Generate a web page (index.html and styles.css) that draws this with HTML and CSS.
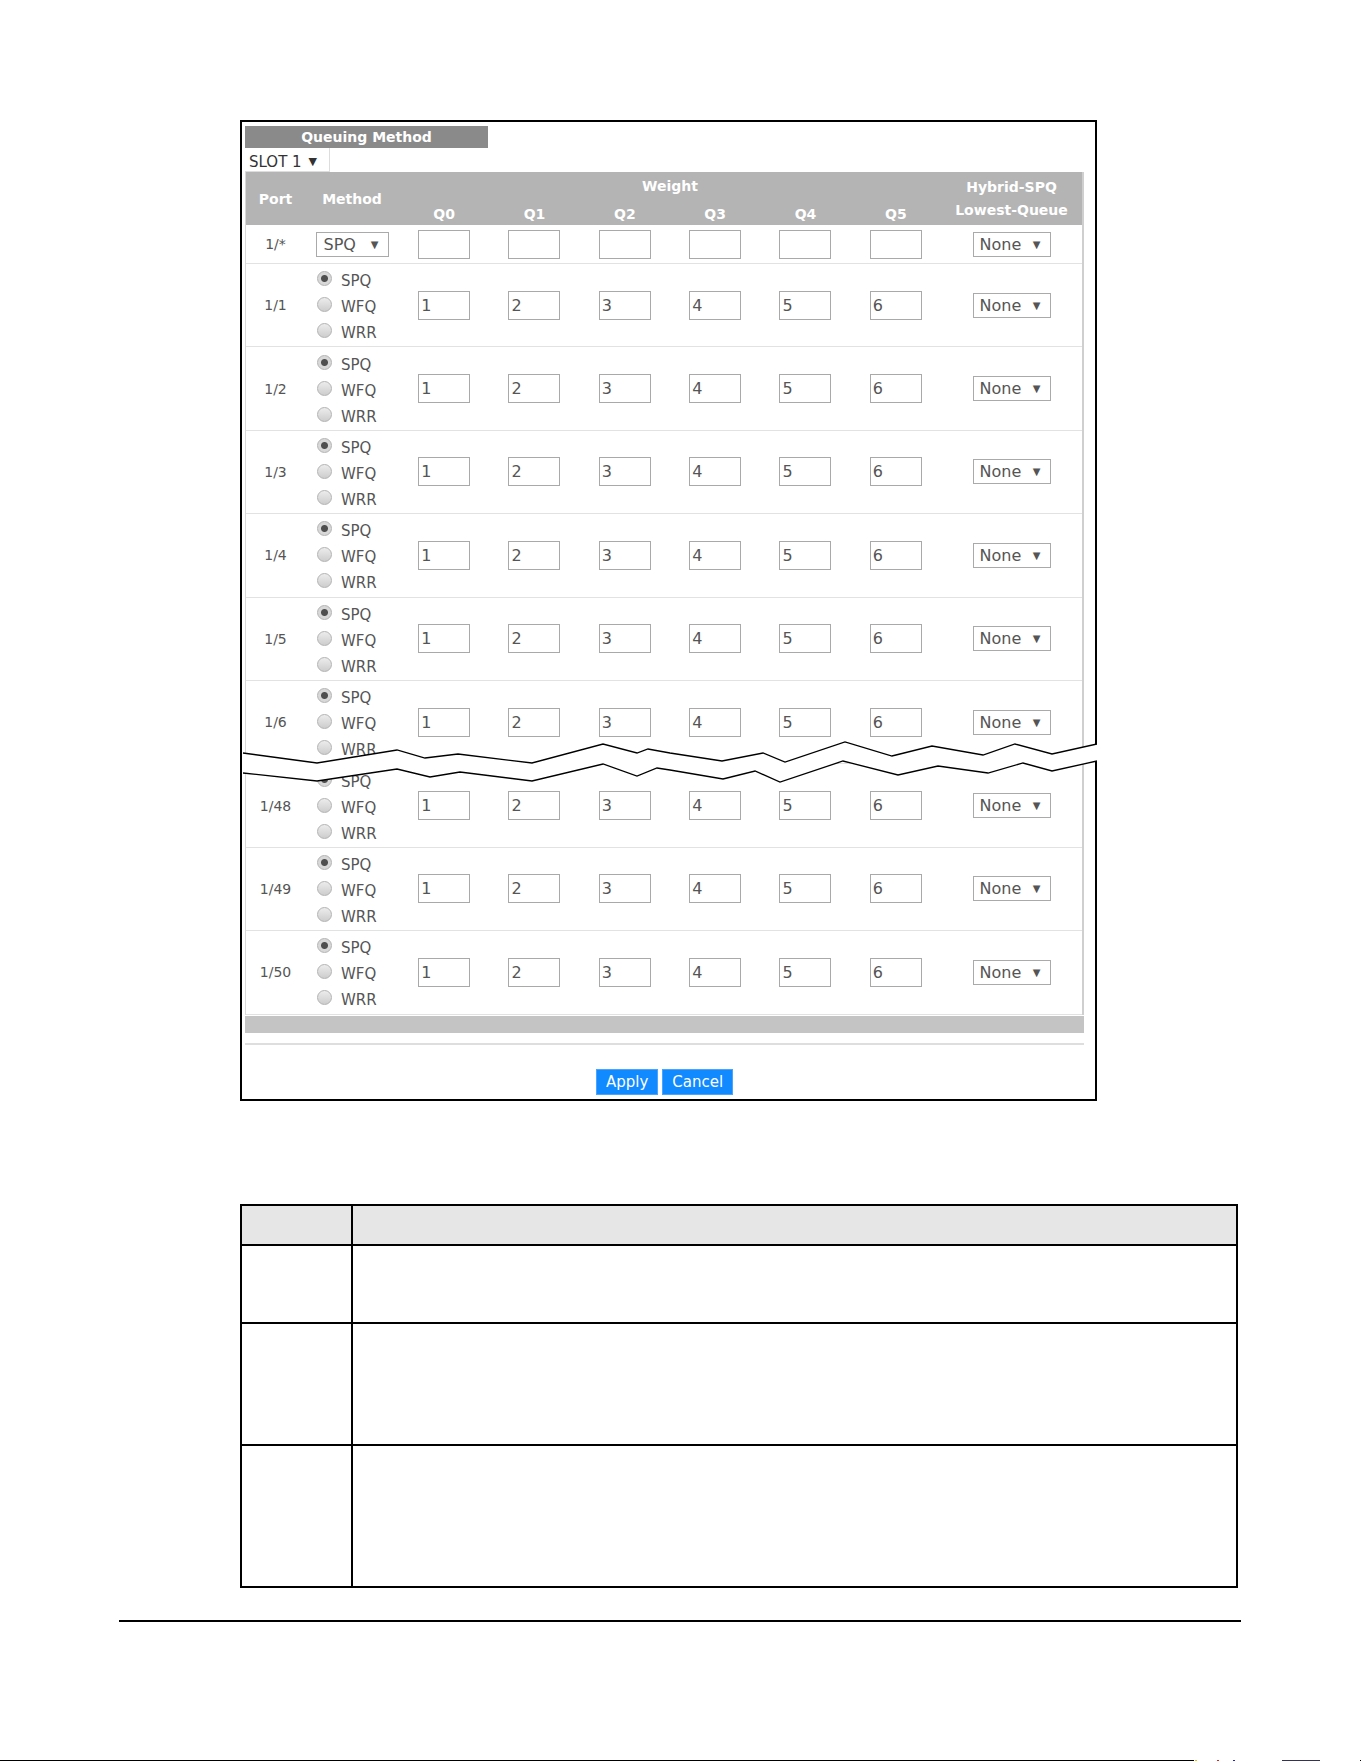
FILE: index.html
```html
<!DOCTYPE html>
<html lang="en">
<head>
    <meta charset="UTF-8">
    <title>Queuing Method</title>
    <link rel="stylesheet" href="styles.css">
</head>
<body>
<div class="screen">
    <div class="panel-title">Queuing Method</div>
    <div class="select slot">SLOT 1 <span class="caret">&#9660;</span></div>

    <table class="queue">
        <colgroup>
            <col class="c-port">
            <col class="c-method">
            <col class="c-q"><col class="c-q"><col class="c-q"><col class="c-q"><col class="c-q"><col class="c-q">
            <col class="c-hybrid">
        </colgroup>
        <thead>
        <tr class="head-top">
            <th rowspan="2">Port</th>
            <th rowspan="2">Method</th>
            <th colspan="6">Weight</th>
            <th rowspan="2" class="hybrid"><div><span>Hybrid-SPQ</span><span>Lowest-Queue</span></div></th>
        </tr>
        <tr class="head-sub">
            <th class="q">Q0</th><th class="q">Q1</th><th class="q">Q2</th>
            <th class="q">Q3</th><th class="q">Q4</th><th class="q">Q5</th>
        </tr>
        </thead>
        <tbody>
        <tr class="all-row">
            <td class="port">1/*</td>
            <td><span class="select method-sel">SPQ <span class="caret">&#9660;</span></span></td>
            <td><input type="text"></td><td><input type="text"></td><td><input type="text"></td>
            <td><input type="text"></td><td><input type="text"></td><td><input type="text"></td>
            <td><span class="select none">None <span class="caret">&#9660;</span></span></td>
        </tr>
        <tr class="port-row">
            <td class="port">1/1</td>
            <td class="method">
                <label><input type="radio" name="p1" checked>SPQ</label>
                <label><input type="radio" name="p1">WFQ</label>
                <label><input type="radio" name="p1">WRR</label>
            </td>
            <td><input type="text" value="1"></td><td><input type="text" value="2"></td><td><input type="text" value="3"></td>
            <td><input type="text" value="4"></td><td><input type="text" value="5"></td><td><input type="text" value="6"></td>
            <td><span class="select none">None <span class="caret">&#9660;</span></span></td>
        </tr>
        <tr class="port-row">
            <td class="port">1/2</td>
            <td class="method">
                <label><input type="radio" name="p2" checked>SPQ</label>
                <label><input type="radio" name="p2">WFQ</label>
                <label><input type="radio" name="p2">WRR</label>
            </td>
            <td><input type="text" value="1"></td><td><input type="text" value="2"></td><td><input type="text" value="3"></td>
            <td><input type="text" value="4"></td><td><input type="text" value="5"></td><td><input type="text" value="6"></td>
            <td><span class="select none">None <span class="caret">&#9660;</span></span></td>
        </tr>
        <tr class="port-row">
            <td class="port">1/3</td>
            <td class="method">
                <label><input type="radio" name="p3" checked>SPQ</label>
                <label><input type="radio" name="p3">WFQ</label>
                <label><input type="radio" name="p3">WRR</label>
            </td>
            <td><input type="text" value="1"></td><td><input type="text" value="2"></td><td><input type="text" value="3"></td>
            <td><input type="text" value="4"></td><td><input type="text" value="5"></td><td><input type="text" value="6"></td>
            <td><span class="select none">None <span class="caret">&#9660;</span></span></td>
        </tr>
        <tr class="port-row">
            <td class="port">1/4</td>
            <td class="method">
                <label><input type="radio" name="p4" checked>SPQ</label>
                <label><input type="radio" name="p4">WFQ</label>
                <label><input type="radio" name="p4">WRR</label>
            </td>
            <td><input type="text" value="1"></td><td><input type="text" value="2"></td><td><input type="text" value="3"></td>
            <td><input type="text" value="4"></td><td><input type="text" value="5"></td><td><input type="text" value="6"></td>
            <td><span class="select none">None <span class="caret">&#9660;</span></span></td>
        </tr>
        <tr class="port-row">
            <td class="port">1/5</td>
            <td class="method">
                <label><input type="radio" name="p5" checked>SPQ</label>
                <label><input type="radio" name="p5">WFQ</label>
                <label><input type="radio" name="p5">WRR</label>
            </td>
            <td><input type="text" value="1"></td><td><input type="text" value="2"></td><td><input type="text" value="3"></td>
            <td><input type="text" value="4"></td><td><input type="text" value="5"></td><td><input type="text" value="6"></td>
            <td><span class="select none">None <span class="caret">&#9660;</span></span></td>
        </tr>
        <tr class="port-row">
            <td class="port">1/6</td>
            <td class="method">
                <label><input type="radio" name="p6" checked>SPQ</label>
                <label><input type="radio" name="p6">WFQ</label>
                <label><input type="radio" name="p6">WRR</label>
            </td>
            <td><input type="text" value="1"></td><td><input type="text" value="2"></td><td><input type="text" value="3"></td>
            <td><input type="text" value="4"></td><td><input type="text" value="5"></td><td><input type="text" value="6"></td>
            <td><span class="select none">None <span class="caret">&#9660;</span></span></td>
        </tr>
        <tr class="port-row">
            <td class="port">1/48</td>
            <td class="method">
                <label><input type="radio" name="p48" checked>SPQ</label>
                <label><input type="radio" name="p48">WFQ</label>
                <label><input type="radio" name="p48">WRR</label>
            </td>
            <td><input type="text" value="1"></td><td><input type="text" value="2"></td><td><input type="text" value="3"></td>
            <td><input type="text" value="4"></td><td><input type="text" value="5"></td><td><input type="text" value="6"></td>
            <td><span class="select none">None <span class="caret">&#9660;</span></span></td>
        </tr>
        <tr class="port-row">
            <td class="port">1/49</td>
            <td class="method">
                <label><input type="radio" name="p49" checked>SPQ</label>
                <label><input type="radio" name="p49">WFQ</label>
                <label><input type="radio" name="p49">WRR</label>
            </td>
            <td><input type="text" value="1"></td><td><input type="text" value="2"></td><td><input type="text" value="3"></td>
            <td><input type="text" value="4"></td><td><input type="text" value="5"></td><td><input type="text" value="6"></td>
            <td><span class="select none">None <span class="caret">&#9660;</span></span></td>
        </tr>
        <tr class="port-row">
            <td class="port">1/50</td>
            <td class="method">
                <label><input type="radio" name="p50" checked>SPQ</label>
                <label><input type="radio" name="p50">WFQ</label>
                <label><input type="radio" name="p50">WRR</label>
            </td>
            <td><input type="text" value="1"></td><td><input type="text" value="2"></td><td><input type="text" value="3"></td>
            <td><input type="text" value="4"></td><td><input type="text" value="5"></td><td><input type="text" value="6"></td>
            <td><span class="select none">None <span class="caret">&#9660;</span></span></td>
        </tr>
        </tbody>
    </table>

    <!-- the "cut" between port 1/6 and 1/48 -->
    <svg class="break" width="855" height="46" viewBox="0 0 855 46">
        <polygon fill="#fff" points="1,13 75,23 155,10 183,18 216,14 290,23 361,4 395,13 406,9 428,13 480,21 521,13 543,22 603,2 650,16 690,6 741,15 773,4 810,14 855,4 855,21 810,31 781,23 746,33 696,26 656,35 601,21 538,42 513,31 481,39 428,30 415,28 395,36 361,24 290,41 218,32 188,37 155,29 75,41 1,33"/>
        <polyline fill="none" stroke="#000" stroke-width="1.3" points="1,13 75,23 155,10 183,18 216,14 290,23 361,4 395,13 406,9 428,13 480,21 521,13 543,22 603,2 650,16 690,6 741,15 773,4 810,14 855,4"/>
        <polyline fill="none" stroke="#000" stroke-width="1.3" points="1,33 75,41 155,29 188,37 218,32 290,41 361,24 395,36 415,28 428,30 481,39 513,31 538,42 601,21 656,35 696,26 746,33 781,23 810,31 855,21"/>
    </svg>

    <div class="table-foot"></div>
    <div class="divider"></div>
    <div class="actions">
        <button type="button">Apply</button>
        <button type="button">Cancel</button>
    </div>
</div>

<table class="desc">
    <tr class="desc-head"><th class="d-label"></th><th></th></tr>
    <tr class="d-row1"><td></td><td></td></tr>
    <tr class="d-row2"><td></td><td></td></tr>
    <tr class="d-row3"><td></td><td></td></tr>
</table>

<div class="rule"></div>
<div class="page-edge"></div>
</body>
</html>
```

FILE: styles.css
```css
body {
    margin: 0;
    font-family: "DejaVu Sans", Verdana, sans-serif;
    color: #555;
    background: #fff;
}

.screen {
    position: relative;
    width: 857px;
    box-sizing: border-box;
    margin: 120px 0 0 240px;
    padding: 4px 11px 4px 3px;
    border: 2px solid #000;
}

.panel-title {
    width: 243px;
    height: 22px;
    line-height: 22px;
    background: #8a8a8a;
    color: #fff;
    font-size: 14px;
    font-weight: bold;
    text-align: center;
}

.select {
    display: flex;
    align-items: center;
    justify-content: space-between;
    box-sizing: border-box;
    height: 25px;
    padding: 0 9px 0 6px;
    border: 1px solid #aaa;
    background: #fff;
    color: #555;
    font-size: 16px;
}
.caret {
    font-size: 10px;
}
.slot {
    width: 85px;
    height: 24px;
    padding: 4px 12px 0 4px;
    border: 1px solid #ddd;
    border-top: none;
    border-left: none;
    color: #333;
    font-size: 15px;
}
.slot .caret {
    font-size: 11px;
}
.method-sel {
    width: 73px;
    margin: 0 auto;
    padding-left: 7px;
}
.none {
    width: 78px;
    margin: 0 auto;
}

.queue {
    width: 839px;
    table-layout: fixed;
    border-collapse: separate;
    border-spacing: 0;
    border-left: 1px solid #d9d9d9;
    border-right: 2px solid #cfcfcf;
}
.c-port { width: 59px; }
.c-method { width: 94px; }
.c-q { width: 90.33px; }
.c-hybrid { width: 141px; }

.queue th {
    padding: 0;
    background: #b4b4b4;
    color: #fff;
    font-size: 14px;
    font-weight: bold;
    text-align: center;
    vertical-align: middle;
}
.head-top { height: 27px; }
.head-sub { height: 26px; }
.queue th.q {
    vertical-align: bottom;
    line-height: 18px;
    padding-bottom: 2px;
}
.queue th.hybrid {
    vertical-align: top;
    padding-top: 6px;
}
.hybrid div {
    display: flex;
    flex-direction: column;
    gap: 5px;
    line-height: 18px;
}

.queue td {
    padding: 0;
    text-align: center;
    vertical-align: middle;
    border-bottom: 1px solid #e2e2e2;
}
.all-row { height: 39px; }
.port-row { height: 83.4px; }

.port {
    font-size: 14px;
    color: #555;
}

.method {
    padding: 4px 0 0 12px !important;
}
.method label {
    display: flex;
    align-items: center;
    height: 26px;
    font-size: 15px;
    color: #555;
}
.method input {
    appearance: none;
    width: 15px;
    height: 15px;
    margin: 0 9px 5px 0;
    border: 1px solid #b3b3b3;
    border-radius: 50%;
    background: linear-gradient(#ececec, #cdcdcd);
}
.method input:checked {
    background: radial-gradient(circle, #4f4f4f 0 3px, #d8d8d8 4px);
}

.queue input[type="text"] {
    width: 52px;
    height: 29px;
    box-sizing: border-box;
    padding: 0 2px;
    border: 1px solid #a9a9a9;
    border-radius: 0;
    font-family: "DejaVu Sans", Verdana, sans-serif;
    font-size: 16px;
    color: #555;
    outline: none;
}

.break {
    position: absolute;
    left: 0;
    top: 618px;
}

.table-foot {
    height: 17px;
    margin-top: 1px;
    background: #c4c4c4;
}
.divider {
    height: 2px;
    margin-top: 10px;
    background: #dedede;
}
.actions {
    display: flex;
    justify-content: center;
    gap: 4px;
    margin-top: 24px;
}
.actions button {
    height: 26px;
    padding: 0 9px;
    background: #1189ff;
    border: 1px solid #4aa3ff;
    color: #fff;
    font-family: "DejaVu Sans", Verdana, sans-serif;
    font-size: 15px;
}

.desc {
    width: 998px;
    margin: 103px 0 0 240px;
    border-collapse: collapse;
}
.desc th,
.desc td {
    padding: 0;
    border: 2px solid #000;
}
.desc th {
    background: #e6e6e6;
}
.d-label { width: 109px; }
.desc-head { height: 40px; }
.d-row1 { height: 78px; }
.d-row2 { height: 122px; }
.d-row3 { height: 142px; }

.rule {
    width: 1122px;
    height: 2px;
    margin: 32px 0 0 119px;
    background: #000;
}
/* top edge of the next page, cut off by the window */
.page-edge {
    width: 1361px;
    height: 1px;
    margin-top: 138px;
    background: linear-gradient(to right,
        #000 0 1194px, transparent 1194px 1195px,
        #e6c000 1195px 1197px, transparent 1197px 1217px,
        #d22 1217px 1219px, transparent 1219px 1233px,
        #22c 1233px 1235px, transparent 1235px 1282px,
        #335 1282px 1320px, transparent 1320px 1360px,
        #000 1360px);
}
```
